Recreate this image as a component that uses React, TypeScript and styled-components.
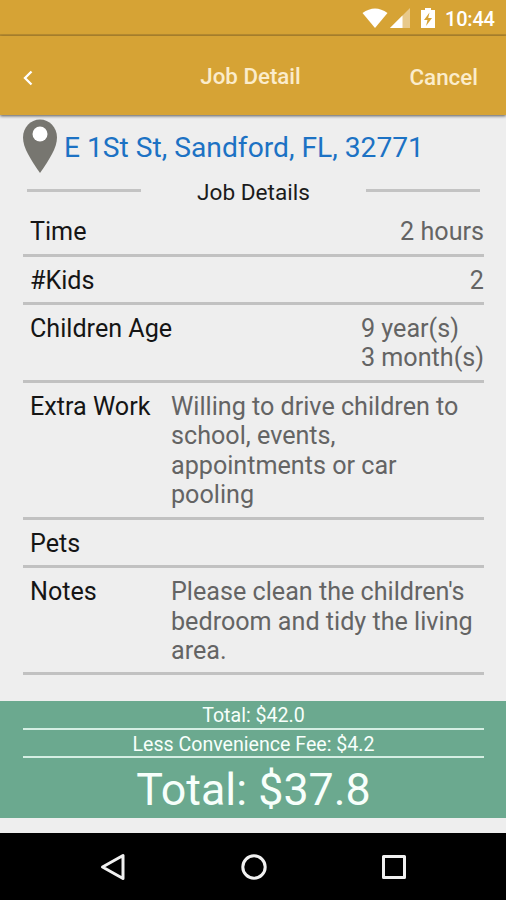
import React from "react";
import styled, { createGlobalStyle } from "styled-components";

const GlobalStyle = createGlobalStyle`
  * { box-sizing: border-box; }
  body { margin: 0; background: #eeeeee; font-family: Roboto, "Liberation Sans", sans-serif; }
`;

const Screen = styled.div`
  width: 506px;
  height: 900px;
  display: flex;
  flex-direction: column;
  overflow: hidden;
  background: #eeeeee;
`;

const StatusBar = styled.div`
  flex: none;
  height: 36px;
  display: flex;
  align-items: center;
  justify-content: flex-end;
  padding-right: 11px;
  background: #d6a335;
  border-bottom: 2px solid #b98d31;
  color: #fff;
`;

const StatusIcons = styled.svg`
  width: 75px;
  height: 24px;
  margin: 2px 8px 0 0;
`;

const Clock = styled.span`
  width: 50px;
  font-size: 20px;
  font-weight: 500;
  line-height: 24px;
  padding-top: 4px;
  white-space: nowrap;
  letter-spacing: -0.2px;
`;

const AppBar = styled.header`
  flex: none;
  height: 79px;
  display: grid;
  grid-template-columns: 1fr 110px 1fr;
  align-items: center;
  padding: 0 28px 0 23px;
  background: #d6a335;
  box-shadow: 0 1px 3px rgba(0, 0, 0, 0.65);
  color: #fbeccb;
  font-weight: 500;
`;

const BackIcon = styled.svg`
  width: 10px;
  height: 16px;
  margin-top: 5px;
`;

const Title = styled.h1`
  margin: 0;
  font-size: 22.3px;
  font-weight: 500;
  text-align: center;
  white-space: nowrap;
`;

const Cancel = styled.span`
  justify-self: end;
  font-size: 22.4px;
  padding-top: 2px;
`;

const Content = styled.main`
  flex: 1;
  padding: 4px 22px 0 23px;
`;

const Address = styled.div`
  height: 57px;
  display: flex;
  align-items: flex-start;
  color: #1c72c4;
  font-size: 28.2px;
  line-height: 34px;
  white-space: nowrap;
`;

const AddressText = styled.span`
  margin: 12px 0 0 7px;
`;

const Pin = styled.svg`
  flex: none;
  width: 34px;
  height: 55px;
`;

const SectionHeading = styled.div`
  height: 32px;
  display: flex;
  align-items: center;
  justify-content: space-between;
  padding: 0 4px;
  color: #1b1b1b;
  font-size: 22.6px;
`;

const HeadingRule = styled.span`
  width: 114px;
  height: 3px;
  margin-bottom: 3px;
  background: #c3c3c3;
`;

const DetailRow = styled.div`
  display: flex;
  padding: 9px 0 7.1px 7px;
  border-bottom: 3px solid #c1c1c1;
  font-size: 25.15px;
  line-height: 29.4px;
  white-space: pre-line;
`;

const Label = styled.span`
  flex: none;
  min-width: 141px;
  min-height: 29.4px;
  color: #151515;
`;

const Value = styled.span<{ $end?: boolean }>`
  margin-left: ${(p) => (p.$end ? "auto" : "0")};
  color: #646464;
`;

const Summary = styled.section`
  flex: none;
  height: 117px;
  display: flex;
  flex-direction: column;
  padding: 0 22px 0 23px;
  margin-bottom: 15px;
  background: #6ba98f;
  color: #f7fffb;
  text-align: center;
`;

const SummaryLine = styled.div<{ $h: number }>`
  height: ${(p) => p.$h}px;
  border-bottom: 2px solid #d5eee3;
  font-size: 19.6px;
  line-height: ${(p) => p.$h + 1}px;
`;

const GrandTotal = styled.div`
  font-size: 44.8px;
  line-height: 64px;
`;

const NavBar = styled.nav`
  flex: none;
  height: 67px;
  display: flex;
  align-items: center;
  justify-content: space-between;
  padding: 0 97px 0 98px;
  background: #000;
`;

const NavIcon = styled.svg`
  width: 30px;
  height: 30px;
  fill: none;
  stroke: #f1f1f1;
  stroke-width: 3;
  stroke-linejoin: round;
`;

const rows = [
  { label: "Time", value: "2 hours", end: true },
  { label: "#Kids", value: "2", end: true },
  { label: "Children Age", value: "9 year(s)\n3 month(s)", end: true },
  { label: "Extra Work", value: "Willing to drive children to\nschool, events,\nappointments or car\npooling" },
  { label: "Pets", value: "" },
  { label: "Notes", value: "Please clean the children's\nbedroom and tidy the living\narea." },
];

export default function App() {
  return (
    <Screen>
      <GlobalStyle />
      <StatusBar>
        <StatusIcons viewBox="0 0 75 24">
          <path d="M0.5 7Q13 -2 25.500 7L13 22Z" fill="#fff" />
          <path d="M48 2V22H28Z" fill="#e8c98b" />
          <path d="M40.500 9.500V22H28Z" fill="#fff" />
          <path d="M63 2h6v2h4v18H59V4h4z" fill="#fff" />
          <path d="M67.500 6.500l-5.500 7.500h3.500l-1.500 6 6-8h-3.800z" fill="#d6a335" />
        </StatusIcons>
        <Clock>10:44</Clock>
      </StatusBar>
      <AppBar>
        <BackIcon viewBox="0 0 10 16">
          <path d="M8.500 1.500L2 8l6.500 6.500" fill="none" stroke="#fff" strokeWidth="2.300" />
        </BackIcon>
        <Title>Job Detail</Title>
        <Cancel>Cancel</Cancel>
      </AppBar>
      <Content>
        <Address>
          <Pin viewBox="0 0 34 55">
            <path d="M17 .5C7.500 .5 0 8.500 0 18.500C0 29 8 41 17 54C26 41 34 29 34 18.500C34 8.500 26.500 .5 17 .5Z" fill="#777670" />
            <circle cx="17" cy="15" r="7.500" fill="#fff" />
          </Pin>
          <AddressText>E 1St St, Sandford, FL, 32771</AddressText>
        </Address>
        <SectionHeading>
          <HeadingRule />
          <span>Job Details</span>
          <HeadingRule />
        </SectionHeading>
        {rows.map((r) => (
          <DetailRow key={r.label}>
            <Label>{r.label}</Label>
            <Value $end={r.end}>{r.value}</Value>
          </DetailRow>
        ))}
      </Content>
      <Summary>
        <SummaryLine $h={29}>Total: $42.0</SummaryLine>
        <SummaryLine $h={28}>Less Convenience Fee: $4.2</SummaryLine>
        <GrandTotal>Total: $37.8</GrandTotal>
      </Summary>
      <NavBar>
        <NavIcon viewBox="0 0 30 30"><path d="M4.500 15L25 3.500V26.500Z" /></NavIcon>
        <NavIcon viewBox="0 0 30 30"><circle cx="15" cy="15" r="11.200" /></NavIcon>
        <NavIcon viewBox="0 0 30 30"><rect x="4.500" y="4.500" width="21" height="21" /></NavIcon>
      </NavBar>
    </Screen>
  );
}
